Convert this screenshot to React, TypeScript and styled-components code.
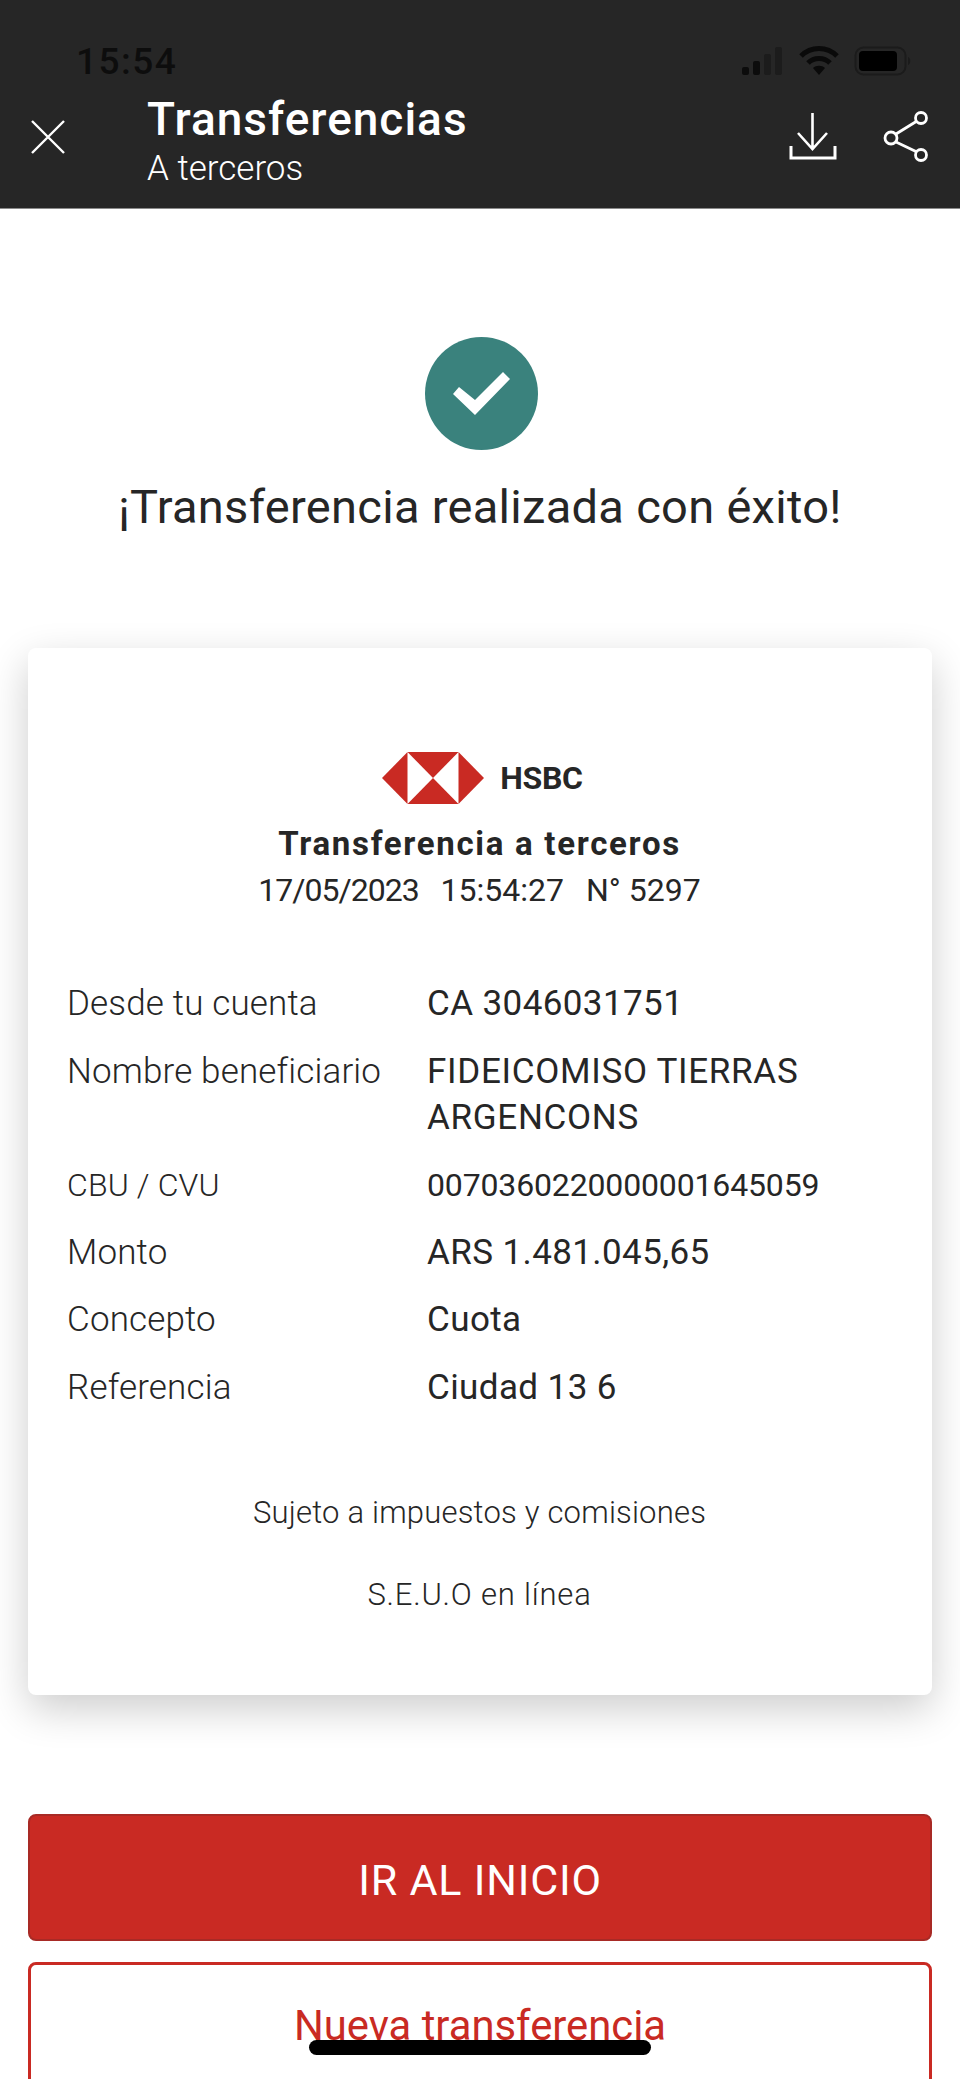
import React from 'react';
import styled, { createGlobalStyle } from 'styled-components';

const GlobalStyle = createGlobalStyle`
  html, body {
    margin: 0;
    padding: 0;
    background: #fff;
  }
  * {
    box-sizing: border-box;
  }
`;

const rows = [
  { label: 'Desde tu cuenta', value: 'CA 3046031751' },
  { label: 'Nombre beneficiario', value: 'FIDEICOMISO TIERRAS ARGENCONS', caps: true },
  { label: 'CBU / CVU', value: '0070360220000001645059', small: true },
  { label: 'Monto', value: 'ARS 1.481.045,65' },
  { label: 'Concepto', value: 'Cuota' },
  { label: 'Referencia', value: 'Ciudad 13 6' },
];

const App: React.FC = () => {
  return (
    <>
      <GlobalStyle />
      <Page>
        <Header>
          <StatusBar>
            <Clock>15:54</Clock>
            <StatusIcons>
              <svg width="42" height="28" viewBox="0 0 42 28">
                <rect x="0" y="20" width="7" height="8" rx="2" fill="#0c0c0c" />
                <rect x="11" y="14" width="7" height="14" rx="2" fill="#0c0c0c" />
                <rect x="22" y="7" width="7" height="21" rx="2" fill="#1c1c1c" />
                <rect x="33" y="0" width="7" height="28" rx="2" fill="#1c1c1c" />
              </svg>
              <svg width="40" height="30" viewBox="0 0 40 30">
                <path d="M2 10 C12 0 28 0 38 10" fill="none" stroke="#0a0a0a" strokeWidth="5" />
                <path d="M9 17 C15 11 25 11 31 17" fill="none" stroke="#0a0a0a" strokeWidth="5" />
                <path d="M14 22 C17 19 23 19 26 22 L20 29 Z" fill="#0a0a0a" />
              </svg>
              <svg width="58" height="30" viewBox="0 0 58 30">
                <rect x="1.5" y="1.5" width="50" height="27" rx="8" fill="none" stroke="#1b1b1b" strokeWidth="2" />
                <rect x="5" y="5" width="38" height="20" rx="4" fill="#000" />
                <path d="M54 11 C57 12 57 18 54 19 Z" fill="#1b1b1b" />
              </svg>
            </StatusIcons>
          </StatusBar>
          <NavBar>
            <IconSlot>
              <svg width="34" height="34" viewBox="0 0 34 34">
                <path d="M1 1 L33 33 M33 1 L1 33" fill="none" stroke="#fff" strokeWidth="2.4" />
              </svg>
            </IconSlot>
            <NavTitles>
              <NavTitle>Transferencias</NavTitle>
              <NavSubtitle>A terceros</NavSubtitle>
            </NavTitles>
            <NavActions>
              <svg width="48" height="48" viewBox="0 0 48 48">
                <path d="M23.5 0 V35 M9 20 L23.5 36 L38 20" fill="none" stroke="#fff" strokeWidth="2.6" />
                <path d="M2 33 V45 H46 V33" fill="none" stroke="#fff" strokeWidth="3" />
              </svg>
              <svg width="48" height="52" viewBox="0 0 48 52">
                <path d="M14 23 L35 10 M14 31 L35 41" fill="none" stroke="#fff" strokeWidth="2.8" />
                <circle cx="39" cy="7" r="5.5" fill="#262626" stroke="#fff" strokeWidth="2.8" />
                <circle cx="39" cy="44" r="5.5" fill="#262626" stroke="#fff" strokeWidth="2.8" />
                <circle cx="9" cy="27" r="6" fill="#262626" stroke="#fff" strokeWidth="2.8" />
              </svg>
            </NavActions>
          </NavBar>
        </Header>

        <Main>
          <Success>
            <CheckCircle>
              <svg width="57" height="43" viewBox="0 0 57 43">
                <polygon points="6,15 0,22 22,43 57,7 50,0 22,28" fill="#fff" />
              </svg>
            </CheckCircle>
            <SuccessText>¡Transferencia realizada con éxito!</SuccessText>
          </Success>

          <Receipt>
            <Logo>
              <svg width="102" height="52" viewBox="0 0 102 52">
                <path d="M25.5 0 H76.5 L51 26 Z" fill="#c92a23" />
                <path d="M25.5 52 H76.5 L51 26 Z" fill="#c92a23" />
                <path d="M25.5 0 V52 L0 26 Z" fill="#c92a23" />
                <path d="M76.5 0 V52 L102 26 Z" fill="#c92a23" />
              </svg>
              <LogoText>HSBC</LogoText>
            </Logo>
            <ReceiptTitle>Transferencia a terceros</ReceiptTitle>
            <ReceiptMeta>
              <ReceiptDate>17/05/2023</ReceiptDate>
              <span>15:54:27</span>
              <span>N° 5297</span>
            </ReceiptMeta>

            <Details>
              {rows.map((row) => (
                <React.Fragment key={row.label}>
                  <DetailLabel $small={row.small}>{row.label}</DetailLabel>
                  <DetailValue $small={row.small} $caps={row.caps}>
                    {row.value}
                  </DetailValue>
                </React.Fragment>
              ))}
            </Details>

            <Note>Sujeto a impuestos y comisiones</Note>
            <Note $gap={54} $tracking={0.8}>
              S.E.U.O en línea
            </Note>
          </Receipt>

          <PrimaryButton>IR AL INICIO</PrimaryButton>
          <SecondaryButton>Nueva transferencia</SecondaryButton>
        </Main>

        <HomeIndicator />
      </Page>
    </>
  );
};

export default App;

const FONT = `Roboto, 'Liberation Sans', sans-serif`;

const Page = styled.div`
  position: relative;
  width: 960px;
  height: 2079px;
  overflow: hidden;
  background: #fff;
  font-family: ${FONT};
  color: #262626;
`;

const Header = styled.header`
  height: 209px;
  background: #262626;
  border-bottom: 1px solid #8a8a8a;
`;

const StatusBar = styled.div`
  display: flex;
  justify-content: space-between;
  align-items: center;
  height: 30px;
  padding: 0 48px 0 76px;
  position: relative;
  top: 46px;
`;

const Clock = styled.span`
  font-size: 37px;
  font-weight: 500;
  letter-spacing: 1.5px;
  color: #0d0d0d;
`;

const StatusIcons = styled.div`
  display: flex;
  align-items: center;
  gap: 15px;
`;

const NavBar = styled.div`
  display: flex;
  align-items: center;
  margin-top: 60px;
  height: 94px;
  padding: 0 30px 0 31px;
`;

const IconSlot = styled.div`
  width: 116px;
  height: 34px;
  line-height: 0;
`;

const NavTitles = styled.div`
  flex: 1;
  display: flex;
  flex-direction: column;
  gap: 6px;
  padding-top: 8px;
`;

const NavTitle = styled.span`
  font-size: 46px;
  line-height: 50px;
  font-weight: 500;
  letter-spacing: 1px;
  color: #fff;
`;

const NavSubtitle = styled.span`
  font-size: 35px;
  line-height: 38px;
  font-weight: 300;
  color: #fff;
`;

const NavActions = styled.div`
  display: flex;
  align-items: center;
  gap: 45px;
`;

const Main = styled.main`
  padding: 128px 28px 0;
`;

const Success = styled.section`
  display: flex;
  flex-direction: column;
  align-items: center;
`;

const CheckCircle = styled.div`
  display: flex;
  align-items: center;
  justify-content: center;
  width: 113px;
  height: 113px;
  margin-left: 2px;
  border-radius: 50%;
  background: #3a827d;
`;

const SuccessText = styled.h1`
  margin: 29px 0 0;
  font-size: 47px;
  line-height: 56px;
  font-weight: 400;
  letter-spacing: 0.3px;
  color: #262626;
`;

const Receipt = styled.section`
  margin-top: 113px;
  height: 1047px;
  padding: 104px 40px 0 39px;
  background: #fff;
  border-radius: 8px;
  box-shadow: 0 14px 40px rgba(0, 0, 0, 0.2);
  display: flex;
  flex-direction: column;
  align-items: center;
`;

const Logo = styled.div`
  display: flex;
  align-items: center;
  gap: 16px;
  padding-left: 6px;
  line-height: 0;
`;

const LogoText = styled.span`
  font-size: 32px;
  line-height: 32px;
  font-weight: 700;
  letter-spacing: -0.3px;
  color: #262626;
`;

const ReceiptTitle = styled.h2`
  margin: 20px 0 0;
  font-size: 33px;
  line-height: 40px;
  font-weight: 700;
  letter-spacing: 1.7px;
  color: #262626;
`;

const ReceiptMeta = styled.div`
  display: flex;
  gap: 22px;
  margin-top: 6px;
  font-size: 32px;
  line-height: 40px;
  color: #262626;
`;

const ReceiptDate = styled.span`
  letter-spacing: -1px;
`;

const Details = styled.div`
  align-self: stretch;
  display: grid;
  grid-template-columns: 360px 1fr;
  row-gap: 21.6px;
  margin-top: 71px;
`;

const DetailLabel = styled.div<{ $small?: boolean }>`
  font-size: ${(p) => (p.$small ? 32 : 35)}px;
  line-height: 46px;
  font-weight: 300;
  letter-spacing: 0.15px;
  color: #262626;
`;

const DetailValue = styled.div<{ $small?: boolean; $caps?: boolean }>`
  font-size: ${(p) => (p.$small ? 32 : 35)}px;
  line-height: 46px;
  letter-spacing: ${(p) => (p.$small ? -0.15 : p.$caps ? 0.7 : 0.4)}px;
  color: #262626;
`;

const Note = styled.p<{ $gap?: number; $tracking?: number }>`
  margin: ${(p) => p.$gap ?? 88}px 0 0;
  font-size: 31px;
  line-height: 28px;
  font-weight: 300;
  letter-spacing: ${(p) => p.$tracking ?? 0.2}px;
  color: #262626;
`;

const ButtonBase = styled.button`
  display: block;
  width: 100%;
  border-radius: 8px;
  font-family: ${FONT};
  padding: 0;
`;

const PrimaryButton = styled(ButtonBase)`
  margin-top: 119px;
  height: 127px;
  padding-top: 4px;
  background: #c92a23;
  border: 2px solid #a82a25;
  font-size: 43px;
  letter-spacing: 0.8px;
  color: #fff;
`;

const SecondaryButton = styled(ButtonBase)`
  margin-top: 21px;
  height: 127px;
  background: #fff;
  border: 3px solid #c92a23;
  font-size: 41.8px;
  color: #c92a23;
`;

const HomeIndicator = styled.div`
  position: absolute;
  left: 309px;
  bottom: 24px;
  width: 342px;
  height: 15px;
  border-radius: 8px;
  background: #000;
`;
